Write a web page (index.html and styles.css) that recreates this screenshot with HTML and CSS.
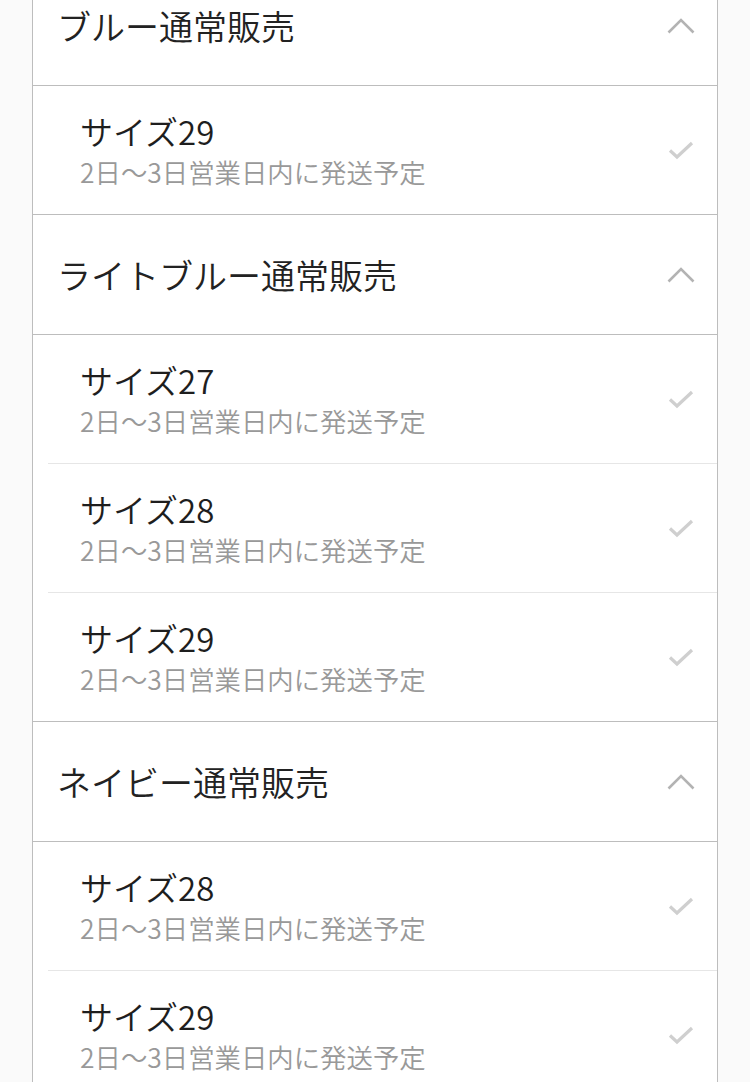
FILE: index.html
```html
<!DOCTYPE html>
<html lang="ja">
<head>
<meta charset="utf-8">
<link rel="stylesheet" href="styles.css">
</head>
<body>
<div class="panel">
  <section class="group">
    <div class="group-head">
      <span class="group-title">ブルー通常販売</span>
      <svg class="chevron" width="28" height="16" viewBox="0 0 28 16"><path d="M1.5 14.5 L14 2 L26.5 14.5" fill="none" stroke="#b3b3b3" stroke-width="2.6"/></svg>
    </div>
    <ul class="items">
      <li class="item"><div class="item-text"><div class="item-title">サイズ29</div><div class="item-sub">2日〜3日営業日内に発送予定</div></div><svg class="check" width="26" height="20" viewBox="0 0 26 20"><path d="M2 10.5 L9 17 L24 3" fill="none" stroke="#cfcfcf" stroke-width="3.2"/></svg></li>
    </ul>
  </section>
  <section class="group">
    <div class="group-head">
      <span class="group-title">ライトブルー通常販売</span>
      <svg class="chevron" width="28" height="16" viewBox="0 0 28 16"><path d="M1.5 14.5 L14 2 L26.5 14.5" fill="none" stroke="#b3b3b3" stroke-width="2.6"/></svg>
    </div>
    <ul class="items">
      <li class="item"><div class="item-text"><div class="item-title">サイズ27</div><div class="item-sub">2日〜3日営業日内に発送予定</div></div><svg class="check" width="26" height="20" viewBox="0 0 26 20"><path d="M2 10.5 L9 17 L24 3" fill="none" stroke="#cfcfcf" stroke-width="3.2"/></svg></li>
      <li class="item"><div class="item-text"><div class="item-title">サイズ28</div><div class="item-sub">2日〜3日営業日内に発送予定</div></div><svg class="check" width="26" height="20" viewBox="0 0 26 20"><path d="M2 10.5 L9 17 L24 3" fill="none" stroke="#cfcfcf" stroke-width="3.2"/></svg></li>
      <li class="item"><div class="item-text"><div class="item-title">サイズ29</div><div class="item-sub">2日〜3日営業日内に発送予定</div></div><svg class="check" width="26" height="20" viewBox="0 0 26 20"><path d="M2 10.5 L9 17 L24 3" fill="none" stroke="#cfcfcf" stroke-width="3.2"/></svg></li>
    </ul>
  </section>
  <section class="group">
    <div class="group-head">
      <span class="group-title">ネイビー通常販売</span>
      <svg class="chevron" width="28" height="16" viewBox="0 0 28 16"><path d="M1.5 14.5 L14 2 L26.5 14.5" fill="none" stroke="#b3b3b3" stroke-width="2.6"/></svg>
    </div>
    <ul class="items">
      <li class="item"><div class="item-text"><div class="item-title">サイズ28</div><div class="item-sub">2日〜3日営業日内に発送予定</div></div><svg class="check" width="26" height="20" viewBox="0 0 26 20"><path d="M2 10.5 L9 17 L24 3" fill="none" stroke="#cfcfcf" stroke-width="3.2"/></svg></li>
      <li class="item"><div class="item-text"><div class="item-title">サイズ29</div><div class="item-sub">2日〜3日営業日内に発送予定</div></div><svg class="check" width="26" height="20" viewBox="0 0 26 20"><path d="M2 10.5 L9 17 L24 3" fill="none" stroke="#cfcfcf" stroke-width="3.2"/></svg></li>
    </ul>
  </section>
</div>
</body>
</html>
```
FILE: styles.css
```css
html, body {
  margin: 0;
  padding: 0;
  background: #fafafa;
  height: 1082px;
  overflow: hidden;
}
body {
  font-family: "Noto Sans CJK JP", "Noto Sans", sans-serif;
  font-weight: 350;
}
.panel {
  margin: -34px 32px 0 32px;
  background: #fff;
  border-left: 1px solid #bdbdbd;
  border-right: 1px solid #bdbdbd;
}
.group {
  border-bottom: 1px solid #bdbdbd;
}
.group-head {
  height: 119px;
  border-bottom: 1px solid #bdbdbd;
  display: flex;
  align-items: center;
  justify-content: space-between;
  padding: 0 22px 0 24px;
}
.group-title {
  font-size: 34px;
  color: #222;
  line-height: 1;
}
.chevron {
  display: block;
}
.items {
  list-style: none;
  margin: 0;
  padding: 0;
}
.item {
  height: 128px;
  margin-left: 15px;
  padding: 0 23px 0 32px;
  display: flex;
  align-items: center;
  justify-content: space-between;
  border-bottom: 1px solid #e6e6e6;
}
.item:last-child {
  border-bottom: none;
}
.item-text {
  display: flex;
  flex-direction: column;
  gap: 7px;
  padding-top: 1px;
}
.item-title {
  font-size: 33px;
  color: #1e1e1e;
  line-height: 1.1;
}
.item-sub {
  font-size: 26.4px;
  color: #999;
  line-height: 1.2;
}
.check {
  display: block;
}
```
